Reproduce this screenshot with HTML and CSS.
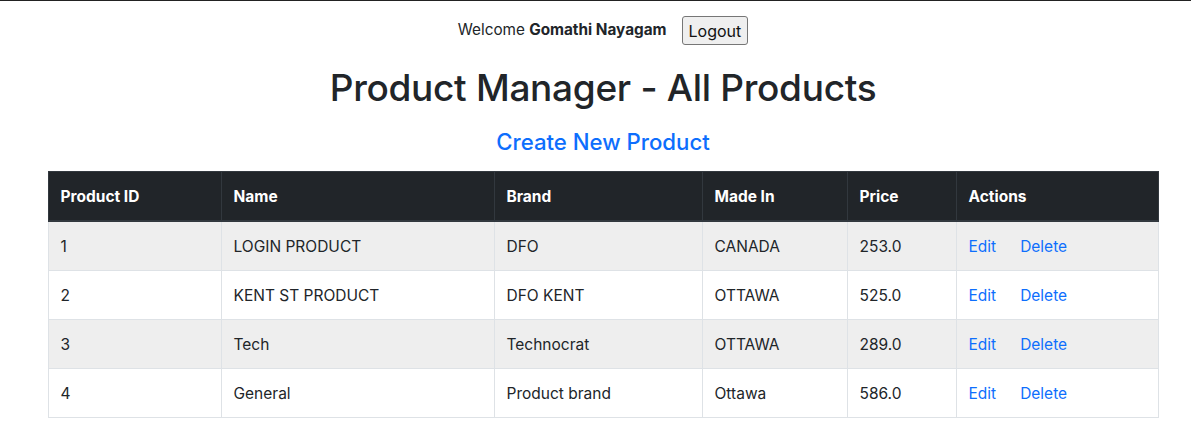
FILE: index.html
```html
<!DOCTYPE html>
<html lang="en">
<head>
<meta charset="utf-8">
<title>Product Manager</title>
<link rel="stylesheet" href="styles.css">
</head>
<body>
<div class="page">
  <div class="welcome">
    <span>Welcome <b>Gomathi Nayagam</b></span>
    <button class="logout" type="button">Logout</button>
  </div>
  <h1 class="title">Product Manager - All Products</h1>
  <h4 class="create"><a href="#">Create New Product</a></h4>
  <table class="products">
    <thead>
      <tr>
        <th class="c-id">Product ID</th>
        <th class="c-name">Name</th>
        <th class="c-brand">Brand</th>
        <th class="c-made">Made In</th>
        <th class="c-price">Price</th>
        <th class="c-act">Actions</th>
      </tr>
    </thead>
    <tbody>
      <tr>
        <td>1</td><td>LOGIN PRODUCT</td><td>DFO</td><td>CANADA</td><td>253.0</td>
        <td><a href="#" class="act">Edit</a><a href="#" class="act">Delete</a></td>
      </tr>
      <tr>
        <td>2</td><td>KENT ST PRODUCT</td><td>DFO KENT</td><td>OTTAWA</td><td>525.0</td>
        <td><a href="#" class="act">Edit</a><a href="#" class="act">Delete</a></td>
      </tr>
      <tr>
        <td>3</td><td>Tech</td><td>Technocrat</td><td>OTTAWA</td><td>289.0</td>
        <td><a href="#" class="act">Edit</a><a href="#" class="act">Delete</a></td>
      </tr>
      <tr>
        <td>4</td><td>General</td><td>Product brand</td><td>Ottawa</td><td>586.0</td>
        <td><a href="#" class="act">Edit</a><a href="#" class="act">Delete</a></td>
      </tr>
    </tbody>
  </table>
</div>
</body>
</html>
```

FILE: styles.css
```css
html, body {
  margin: 0;
  padding: 0;
  overflow-x: hidden;
}
body {
  border-top: 1px solid #222;
  font-family: Inter, "Liberation Sans", sans-serif;
  font-size: 16px;
  line-height: 1.5;
  color: #212529;
  background: #fff;
}
.page {
  width: 1206px;
  display: flex;
  flex-direction: column;
  align-items: center;
}
.welcome {
  display: flex;
  align-items: center;
  gap: 15px;
  margin-top: 15px;
  font-size: 15.3px;
  color: #212529;
}
.welcome b {
  font-weight: 700;
}
.logout {
  font-family: Inter, "Liberation Sans", sans-serif;
  font-size: 16px;
  height: 29px;
  padding: 0 6px;
  border: 1px solid #767676;
  border-radius: 3px;
  background: #efefef;
  color: #111;
}
.title {
  margin: 19px 0 0;
  font-size: 37px;
  font-weight: 500;
  line-height: 48px;
  letter-spacing: -0.3px;
}
.create {
  margin: 15px 0 0;
  font-size: 22.2px;
  font-weight: 500;
  line-height: 29px;
}
.create a {
  color: #0d6efd;
  text-decoration: none;
}
.products {
  margin-top: 15px;
  width: 1110px;
  border-collapse: collapse;
  table-layout: fixed;
}
.products th, .products td {
  box-sizing: border-box;
  text-align: left;
  padding: 13px 12px 11px;
  border: 1px solid #dee2e6;
  line-height: 24px;
  font-size: 15.5px;
}
.products th {
  background: #212529;
  color: #fff;
  font-weight: 700;
  border-color: #32383e;
  border-bottom-width: 2px;
}
.products tbody tr:nth-child(odd) td {
  background: #eeeeee;
}
.c-id { width: 173px; }
.c-name { width: 273px; }
.c-brand { width: 208px; }
.c-made { width: 145px; }
.c-price { width: 109px; }
.c-act { width: 202px; }
.act {
  color: #0d6efd;
  text-decoration: none;
  margin-right: 24px;
}
```
